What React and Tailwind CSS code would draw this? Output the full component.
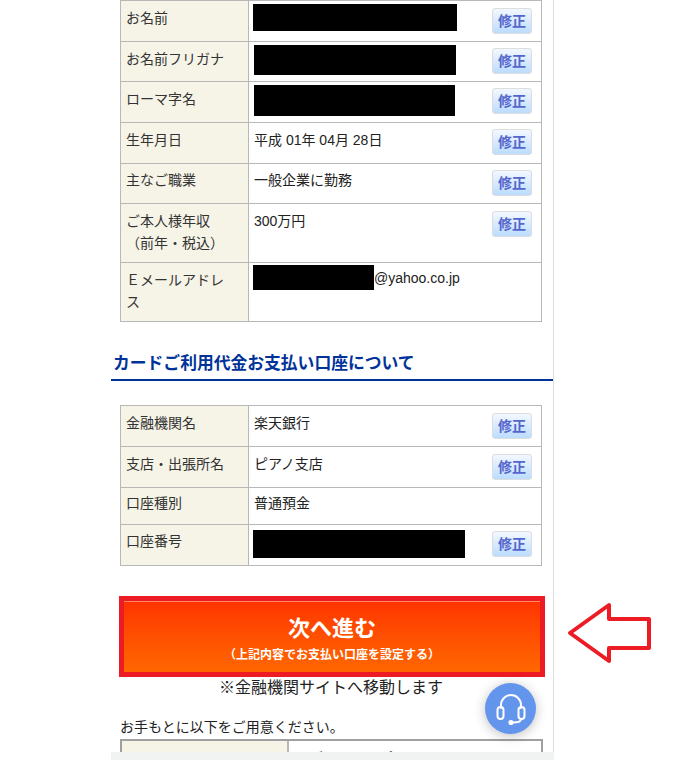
const font = { fontFamily: '"Liberation Sans","Noto Sans CJK JP",sans-serif' };

function FixButton() {
  return (
    <span className="block w-[40px] h-[26px] rounded-[3px] border border-[#dddddd] bg-gradient-to-b from-[#f3f8ff] to-[#bcdcff] text-[#5566cc] text-[14px] font-bold leading-[24px] text-center">
      修正
    </span>
  );
}

function Redact({ w, h, ml = 0, mt = 0 }) {
  return <div className="bg-black" style={{ width: w, height: h, marginLeft: ml, marginTop: mt }} />;
}

function Row({ label, h, children, fix = true, btnTop = 6, labelTop = 6 }) {
  return (
    <tr style={{ height: h }}>
      <th
        className="w-[128px] border border-[#b8b8b8] bg-[#f6f3e7] align-top text-left font-normal text-[#333333] text-[14px] leading-[22px] pl-[5px] pr-[4px]"
        style={{ paddingTop: labelTop }}
      >
        {label}
      </th>
      <td className="border border-[#b8b8b8] align-top relative p-0">
        <div className="flex justify-between">
          <div className="text-[14px] leading-[20px] text-[#222222] pl-[5px]">{children}</div>
          {fix && (
            <div className="pr-[9px]" style={{ paddingTop: btnTop }}>
              <FixButton />
            </div>
          )}
        </div>
      </td>
    </tr>
  );
}

function Txt({ children, top = 7 }) {
  return <div style={{ paddingTop: top }}>{children}</div>;
}

export default function App() {
  return (
    <div className="w-[695px] h-[770px] bg-white relative overflow-hidden" style={font}>
      <div className="ml-[111px] w-[443px] h-[752px] border-r border-[#dddddd] overflow-hidden">
        <div className="pl-[9px] pr-[11px]">
          <table className="w-[422px] border-collapse table-fixed">
            <tbody>
              <Row label="お名前" h={41} btnTop={7}><Redact w={204} h={27} mt={3} ml={-1} /></Row>
              <Row label="お名前フリガナ" h={40}><Redact w={202} h={30} mt={3} /></Row>
              <Row label="ローマ字名" h={41}><Redact w={201} h={31} mt={3} /></Row>
              <Row label="生年月日" h={41}><Txt>平成 01年 04月 28日</Txt></Row>
              <Row label="主なご職業" h={40} labelTop={5}><Txt top={6}>一般企業に勤務</Txt></Row>
              <Row label={<>ご本人様年収<br />（前年・税込）</>} h={59} btnTop={7}><Txt>300万円</Txt></Row>
              <Row label={<span className="block w-[105px]">Ｅメールアドレス</span>} h={59} fix={false}>
                <div className="flex items-start">
                  <Redact w={121} h={25} mt={2} ml={-1} />
                  <span className="mt-[5px]">@yahoo.co.jp</span>
                </div>
              </Row>
            </tbody>
          </table>
        </div>

        <h2 className="mt-[29px] h-[30px] border-b-2 border-[#003399] pl-[2px] text-[16.8px] leading-[26px] font-bold text-[#003399]">
          カードご利用代金お支払い口座について
        </h2>

        <div className="pl-[9px] pr-[11px] mt-[24px]">
          <table className="w-[422px] border-collapse table-fixed">
            <tbody>
              <Row label="金融機関名" h={41} btnTop={7}><Txt>楽天銀行</Txt></Row>
              <Row label="支店・出張所名" h={41} btnTop={7}><Txt>ピアノ支店</Txt></Row>
              <Row label="口座種別" h={37} fix={false} labelTop={4}><Txt top={5}>普通預金</Txt></Row>
              <Row label="口座番号" h={41} btnTop={6} labelTop={5}><Redact w={212} h={28} mt={5} ml={-1} /></Row>
            </tbody>
          </table>
        </div>

        <div className="ml-[8px] mt-[30px] w-[426px] h-[81px] border-[5px] border-[#ed1c24]">
          <div className="h-full border-t border-[#ff8a66] bg-gradient-to-b from-[#ff3300] to-[#ff6600] text-white font-bold text-center">
            <div className="text-[22px] leading-[28px] pt-[13px]">次へ進む</div>
            <div className="text-[12px] leading-[16px] mt-[4px]">（上記内容でお支払い口座を設定する）</div>
          </div>
        </div>

        <p className="text-[16px] leading-[20px] text-[#222222] text-center w-[440px] mt-[1px]">※金融機関サイトへ移動します</p>

        <p className="text-[14px] leading-[20px] text-[#222222] ml-[9px] mt-[19px]">お手もとに以下をご用意ください。</p>

        <div className="ml-[9px] mt-[2px] w-[423px] flex border-2 border-[#a0a0a0] h-[40px]">
          <div className="w-[167px] bg-[#f6f3e7] border-r-2 border-[#b8b8b8] text-[14px] leading-[20px] pt-[7px] pl-[6px] text-[#333333]">キャッシュカード</div>
          <div className="flex-1 text-[14px] leading-[20px] pt-[7px] pl-[6px] text-[#222222]">ログインIDとパスワード</div>
        </div>
      </div>
      <div className="ml-[111px] w-[443px] h-[8px] bg-[#f1f3f2]" />

      <div className="absolute left-[485px] top-[683px] w-[51px] h-[51px] rounded-full bg-[#6495ed] shadow-[0_2px_12px_rgba(0,0,0,0.25)] flex items-center justify-center">
        <svg width="32" height="32" viewBox="0 0 32 32" fill="none" stroke="white" strokeWidth="2" strokeLinecap="round">
          <path d="M6 15v-3a10 10 0 0 1 20 0v3" />
          <rect x="2.5" y="14" width="6" height="12" rx="3" />
          <rect x="23.5" y="14" width="6" height="12" rx="3" />
          <path d="M26 26c0 2-3 3.5-8 3.5" />
          <circle cx="16" cy="29.5" r="1.6" fill="white" />
        </svg>
      </div>

      <svg className="absolute left-[560px] top-[596px]" width="100" height="74" viewBox="0 0 100 74" fill="none">
        <path d="M10 37 L49 9 L49 23 L89 23 L89 52 L49 52 L49 65 Z" stroke="#ed1c24" strokeWidth="4" strokeLinejoin="round" fill="white" />
      </svg>
    </div>
  );
}
